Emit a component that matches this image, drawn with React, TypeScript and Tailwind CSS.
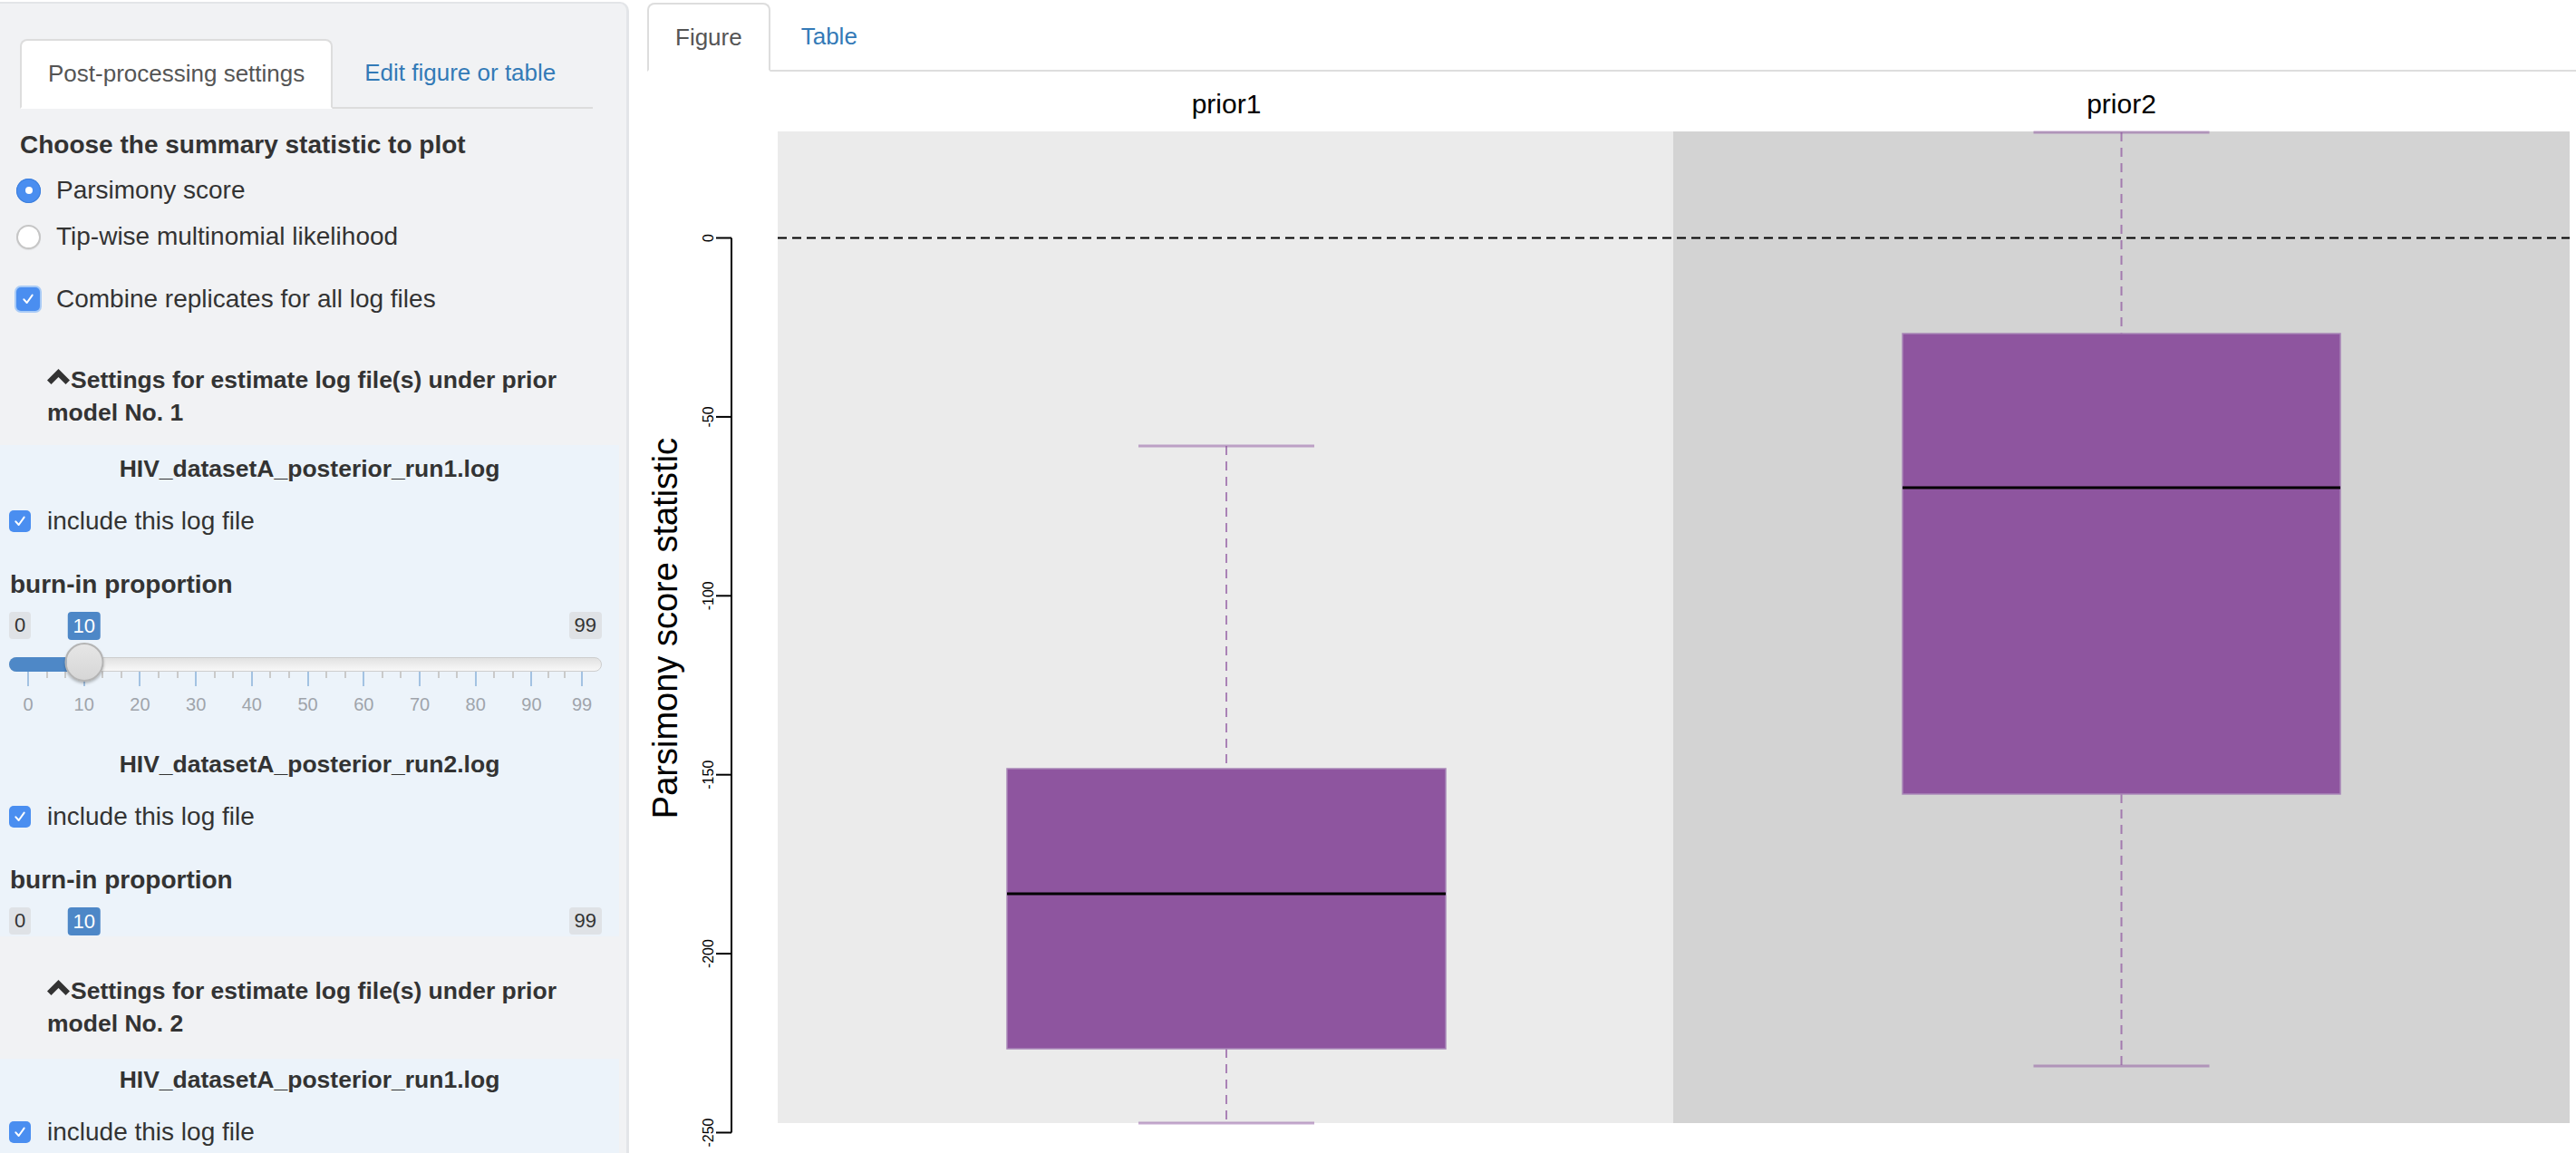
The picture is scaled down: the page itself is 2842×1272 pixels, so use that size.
import React from 'react';

const SLIDER_MIN = 0;
const SLIDER_MAX = 99;
// grid runs from 21px to 632px inside the 654px slider
const pos = (v: number) => 21 + ((v - SLIDER_MIN) / (SLIDER_MAX - SLIDER_MIN)) * 611;

const majors = [0, 10, 20, 30, 40, 50, 60, 70, 80, 90, 99];
const minors = majors.slice(0, -1).flatMap((a, i) => {
  const b = majors[i + 1];
  return [a + (b - a) / 3, a + (2 * (b - a)) / 3];
});

function Caret() {
  return (
    <svg viewBox="0 0 25 18" className="mr-[1px] inline-block h-[18px] w-[25px] align-[3px]">
      <path d="M12.5 0 L25 12.5 L20.5 17 L12.5 9 L4.5 17 L0 12.5 Z" fill="#333333" />
    </svg>
  );
}

function Tick() {
  return (
    <svg viewBox="0 0 24 24" className="h-[16px] w-[16px]">
      <polyline points="5,12.5 10,18 19,5.5" fill="none" stroke="white" strokeWidth="3" strokeLinecap="round" strokeLinejoin="round" />
    </svg>
  );
}

function RadioRow({ checked, label }: { checked?: boolean; label: string }) {
  return (
    <div className="flex h-[40px] items-center gap-[17px] pl-[18px]">
      {checked ? (
        <span className="flex h-[27px] w-[27px] items-center justify-center rounded-full bg-[#4a8ef0] shadow-[inset_0_0_0_1px_#3d7fdc]">
          <span className="h-[8px] w-[8px] rounded-full bg-white" />
        </span>
      ) : (
        <span className="h-[27px] w-[27px] rounded-full border-2 border-[#c6c6c6] bg-white shadow-[0_1px_1px_rgba(0,0,0,0.08)]" />
      )}
      <span className="text-[28px] leading-[40px]">{label}</span>
    </div>
  );
}

function SectionHeader({ n, top }: { n: number; top: 'first' | 'next' }) {
  return (
    <div className={top === 'first' ? 'mt-[51px] mb-[18px]' : 'mt-[42px] mb-[21px]'}>
      <div className="pl-[52px] pr-[40px] text-[26.5px] font-bold leading-[36px]">
        <Caret />
        {`Settings for estimate log file(s) under prior model No. ${n}`}
      </div>
    </div>
  );
}

function Slider({ value, full }: { value: number; full: boolean }) {
  return (
    <div className={full ? 'relative ml-[10px] h-[120px] w-[654px]' : 'relative ml-[10px] h-[30px] w-[654px]'}>
      <span className="absolute left-0 top-0 rounded-[4px] bg-[#dfe2e6] px-[6px] text-[22px] leading-[30px] text-[#333333]">{SLIDER_MIN}</span>
      <span className="absolute right-0 top-0 rounded-[4px] bg-[#dfe2e6] px-[6px] text-[22px] leading-[30px] text-[#333333]">{SLIDER_MAX}</span>
      <span
        className="absolute top-0 -translate-x-1/2 rounded-[4px] bg-[#4d87c7] px-[6px] text-[22px] leading-[31px] text-white"
        style={{ left: pos(value) }}
      >
        {value}
      </span>
      {full && (
        <>
          <div className="absolute left-0 right-0 top-[50px] h-[16px] rounded-full border border-[#cdcdcd] bg-gradient-to-b from-[#e2e2e2] to-[#f8f8f8]" />
          <div className="absolute left-0 top-[50px] h-[16px] rounded-l-full bg-[#4e88c7]" style={{ width: pos(value) }} />
          {minors.map((v) => (
            <span key={'m' + v} className="absolute top-[66px] h-[7px] w-[2px] bg-[#cacaca]" style={{ left: pos(v) - 1 }} />
          ))}
          {majors.map((v) => (
            <span key={'M' + v} className="absolute top-[66px] h-[16px] w-[2px] bg-[#a3c2e2]" style={{ left: pos(v) - 1 }} />
          ))}
          {majors.map((v) => (
            <span
              key={'L' + v}
              className="absolute top-[90px] -translate-x-1/2 text-[20px] leading-[24px] text-[#9fa4ab]"
              style={{ left: pos(v) }}
            >
              {v}
            </span>
          ))}
          <span
            className="absolute top-[34px] h-[43px] w-[43px] -translate-x-1/2 rounded-full border-2 border-[#b4b4b4] bg-gradient-to-b from-[#e6e6e6] to-[#d6d6d6] shadow-[0_2px_3px_rgba(0,0,0,0.25)]"
            style={{ left: pos(value) }}
          />
        </>
      )}
    </div>
  );
}

function LogEntry({ file, slider, first }: { file: string; slider: 'full' | 'labels' | 'none'; first?: boolean }) {
  return (
    <div className={first ? '' : 'mt-[30px]'}>
      <div className="text-center text-[26.5px] font-bold leading-[36px]">{file}</div>
      <div className="mt-[20px] flex h-[40px] items-center gap-[18px] pl-[10px]">
        <span className="flex h-[24px] w-[24px] items-center justify-center rounded-[5px] bg-[#4a8ef0]">
          <Tick />
        </span>
        <span className="text-[28px] leading-[40px]">include this log file</span>
      </div>
      {slider !== 'none' && (
        <>
          <div className="mt-[30px] pl-[11px] text-[28px] font-bold leading-[40px]">burn-in proportion</div>
          <div className="mt-[10px]">
            <Slider value={10} full={slider === 'full'} />
          </div>
        </>
      )}
    </div>
  );
}

function Sidebar() {
  return (
    <aside className="mt-[2px] h-[1270px] w-[694px] shrink-0 overflow-hidden rounded-tr-[10px] border-r-[3px] border-t-2 border-[#e3e5e8] bg-[#f1f2f4] pt-[39px]">
      <div className="ml-[22px] flex w-[632px] items-end border-b-2 border-[#dddddd]">
        <div className="-mb-[2px] flex h-[77px] items-center rounded-t-[8px] border-2 border-[#dddddd] border-b-white bg-white px-[29px] text-[26px] text-[#555555]">
          Post-processing settings
        </div>
        <div className="ml-[4px] flex h-[75px] items-center px-[31px] text-[26px] text-[#337ab7]">Edit figure or table</div>
      </div>

      <div className="mt-[20px] pl-[22px] text-[28px] font-bold leading-[40px]">Choose the summary statistic to plot</div>
      <div className="mt-[10px] flex flex-col gap-[11px]">
        <RadioRow checked label="Parsimony score" />
        <RadioRow label="Tip-wise multinomial likelihood" />
      </div>
      <div className="mt-[29px] flex h-[40px] items-center gap-[18px] pl-[18px]">
        <span className="flex h-[26px] w-[26px] items-center justify-center rounded-[5px] bg-[#4a8ef0] ring-2 ring-[#a9cbf6]">
          <Tick />
        </span>
        <span className="text-[28px] leading-[40px]">Combine replicates for all log files</span>
      </div>

      <SectionHeader n={1} top="first" />
      <div className="w-[683px] bg-[#ecf3fa] pb-[2px] pt-[7.5px]">
        <LogEntry first file="HIV_datasetA_posterior_run1.log" slider="full" />
        <LogEntry file="HIV_datasetA_posterior_run2.log" slider="labels" />
      </div>

      <SectionHeader n={2} top="next" />
      <div className="h-[200px] w-[683px] bg-[#ecf3fa] pt-[5.5px]">
        <LogEntry first file="HIV_datasetA_posterior_run1.log" slider="none" />
      </div>
    </aside>
  );
}

const boxes = [
  { label: 'prior1', cx: 1353, left: 1111, right: 1595, q3: 848, med: 986, q1: 1157, hi: 492, lo: 1239 },
  { label: 'prior2', cx: 2340.5, left: 2099, right: 2582, q3: 368, med: 538, q1: 876, hi: 146, lo: 1176 },
];

function Chart() {
  const y = (v: number) => 262.5 - v * 3.948;
  const ticks = [0, -50, -100, -150, -200, -250];
  return (
    <svg width="2128" height="1193" viewBox="714 79 2128 1193" className="block" fontFamily="'Liberation Sans', Arial, sans-serif">
      <rect x="858" y="145" width="988" height="1094" fill="#ebebeb" />
      <rect x="1846" y="145" width="989" height="1094" fill="#d3d3d3" />
      <line x1="858" x2="2835" y1={y(0)} y2={y(0)} stroke="#000" strokeWidth="2" strokeDasharray="10 6" />

      {boxes.map((b) => (
        <g key={b.label}>
          <text x={b.cx} y="125" fontSize="30" textAnchor="middle" fill="#000">{b.label}</text>
          <line x1={b.cx} x2={b.cx} y1={b.hi} y2={b.q3} stroke="#8e559f" strokeOpacity="0.7" strokeWidth="2" strokeDasharray="10 7" />
          <line x1={b.cx} x2={b.cx} y1={b.q1} y2={b.lo} stroke="#8e559f" strokeOpacity="0.7" strokeWidth="2" strokeDasharray="10 7" />
          <line x1={b.cx - 97} x2={b.cx + 97} y1={b.hi} y2={b.hi} stroke="#8e559f" strokeOpacity="0.5" strokeWidth="3" />
          <line x1={b.cx - 97} x2={b.cx + 97} y1={b.lo} y2={b.lo} stroke="#8e559f" strokeOpacity="0.5" strokeWidth="3" />
          <rect x={b.left} y={b.q3} width={b.right - b.left} height={b.q1 - b.q3} fill="#8e559f" stroke="#a987b8" strokeWidth="1.5" />
          <line x1={b.left} x2={b.right} y1={b.med} y2={b.med} stroke="#000" strokeWidth="3" />
        </g>
      ))}

      <line x1="807" x2="807" y1={y(0)} y2={y(-250)} stroke="#000" strokeWidth="2" />
      {ticks.map((t) => (
        <g key={t}>
          <line x1="790" x2="807" y1={y(t)} y2={y(t)} stroke="#000" strokeWidth="2" />
          <text x="787" y={y(t)} fontSize="16" textAnchor="middle" transform={`rotate(-90 787 ${y(t)})`} fill="#000">
            {t}
          </text>
        </g>
      ))}
      <text x="747" y="693" fontSize="38" textAnchor="middle" transform="rotate(-90 747 693)" fill="#000">
        Parsimony score statistic
      </text>
    </svg>
  );
}

export default function App() {
  return (
    <div className="flex h-[1272px] w-[2842px] overflow-hidden bg-white font-['Liberation_Sans',Arial,sans-serif] text-[#333333]">
      <Sidebar />
      <main className="ml-[20px] flex flex-1 flex-col pt-[3px]">
        <div className="flex h-[76px] items-end border-b-2 border-[#dddddd]">
          <div className="-mb-[2px] flex h-[76px] items-center rounded-t-[8px] border-2 border-[#dddddd] border-b-white bg-white px-[29px] text-[26px] text-[#555555]">
            Figure
          </div>
          <div className="ml-[4px] flex h-[74px] items-center px-[30px] text-[26px] text-[#337ab7]">Table</div>
        </div>
        <Chart />
      </main>
    </div>
  );
}
